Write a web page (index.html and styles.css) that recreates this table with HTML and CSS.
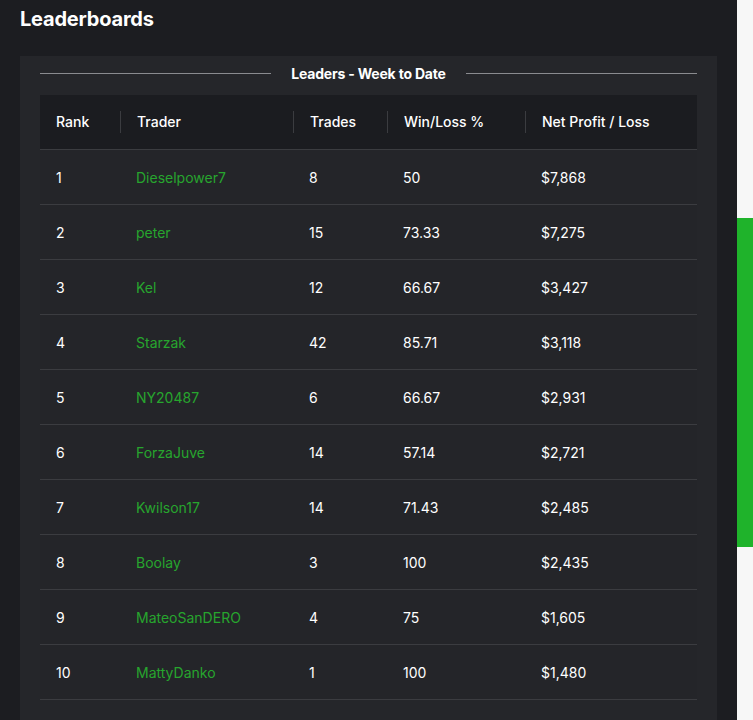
FILE: index.html
```html
<!DOCTYPE html>
<html>
<head>
<meta charset="utf-8">
<link rel="stylesheet" href="styles.css">
</head>
<body>
<div class="layout">
  <main class="main">
    <h1 class="title">Leaderboards</h1>
    <section class="card">
      <div class="legend"><span class="rule"></span><span class="legend-text">Leaders - Week to Date</span><span class="rule"></span></div>
      <table class="board">
        <thead>
          <tr>
            <th class="c-rank"><span>Rank</span></th>
            <th class="c-trader"><span>Trader</span></th>
            <th class="c-trades"><span>Trades</span></th>
            <th class="c-win"><span>Win/Loss %</span></th>
            <th class="c-net"><span>Net Profit / Loss</span></th>
          </tr>
        </thead>
        <tbody>
          <tr><td>1</td><td class="name">Dieselpower7</td><td>8</td><td>50</td><td>$7,868</td></tr>
          <tr><td>2</td><td class="name">peter</td><td>15</td><td>73.33</td><td>$7,275</td></tr>
          <tr><td>3</td><td class="name">Kel</td><td>12</td><td>66.67</td><td>$3,427</td></tr>
          <tr><td>4</td><td class="name">Starzak</td><td>42</td><td>85.71</td><td>$3,118</td></tr>
          <tr><td>5</td><td class="name">NY20487</td><td>6</td><td>66.67</td><td>$2,931</td></tr>
          <tr><td>6</td><td class="name">ForzaJuve</td><td>14</td><td>57.14</td><td>$2,721</td></tr>
          <tr><td>7</td><td class="name">Kwilson17</td><td>14</td><td>71.43</td><td>$2,485</td></tr>
          <tr><td>8</td><td class="name">Boolay</td><td>3</td><td>100</td><td>$2,435</td></tr>
          <tr><td>9</td><td class="name">MateoSanDERO</td><td>4</td><td>75</td><td>$1,605</td></tr>
          <tr><td>10</td><td class="name">MattyDanko</td><td>1</td><td>100</td><td>$1,480</td></tr>
        </tbody>
      </table>
    </section>
  </main>
  <aside class="side"><div class="side-bar"></div></aside>
</div>
</body>
</html>
```

FILE: styles.css
```css
html, body {
  margin: 0;
  padding: 0;
  height: 100%;
  overflow: hidden;
}
body {
  font-family: "Inter", "Open Sans", sans-serif;
  color: #ffffff;
  background: #f7f7f7;
}
.layout {
  display: flex;
  height: 720px;
  overflow: hidden;
}
.main {
  width: 737px;
  flex: none;
  background: #1c1d21;
  padding: 0 20px;
  box-sizing: border-box;
  display: flex;
  flex-direction: column;
  overflow: hidden;
}
.title {
  margin: 0;
  padding-top: 5px;
  height: 56px;
  flex: none;
  box-sizing: border-box;
  font-size: 20px;
  font-weight: 700;
  line-height: 28px;
  letter-spacing: -0.2px;
}
.card {
  flex: 1;
  background: #25262a;
  padding: 7px 20px 0;
  min-height: 0;
}
.legend {
  display: flex;
  align-items: center;
  gap: 20px;
  height: 20px;
  margin-bottom: 12px;
}
.rule {
  flex: 1;
  height: 1px;
  background: #8a8b8f;
}
.legend-text {
  font-size: 14px;
  font-weight: 700;
  letter-spacing: -0.2px;
}
.board {
  width: 100%;
  border-collapse: collapse;
  font-size: 14px;
  table-layout: fixed;
}
.board th {
  background: #1b1c20;
  height: 54px;
  padding: 0;
  text-align: left;
  font-weight: 500;
  border-bottom: 1px solid #3b3c40;
}
.board th span {
  display: block;
  padding-left: 16px;
  line-height: 22px;
  border-left: 1px solid #3b3c40;
}
.board th.c-rank span {
  border-left: none;
}
.c-rank { width: 80px; }
.c-trader { width: 173px; }
.c-trades { width: 94px; }
.c-win { width: 138px; }
.board td {
  height: 54px;
  padding: 0 0 0 16px;
  border-bottom: 1px solid #3b3c40;
  background: #242529;
}
.board td.name {
  color: #27a52e;
}
.side {
  flex: 1;
  padding-top: 218px;
}
.side-bar {
  height: 329px;
  background: #1fb32b;
}
```
